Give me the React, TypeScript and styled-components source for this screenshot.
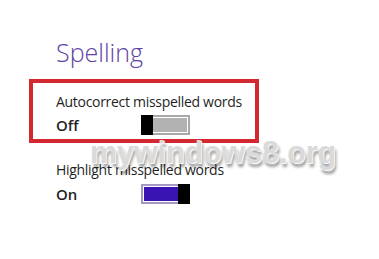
import React from "react";
import styled, { createGlobalStyle } from "styled-components";

const Global = createGlobalStyle`
  html, body { margin: 0; padding: 0; background: #ffffff; }
  body { width: 379px; height: 259px; overflow: hidden; }
`;

const Page = styled.div`
  position: relative;
  width: 379px;
  height: 259px;
  box-sizing: border-box;
  padding: 37px 0 0 29px;
  font-family: "Open Sans", "Noto Sans", sans-serif;
  color: #1f1f1f;
`;

const Title = styled.h1`
  margin: 0 0 12px 27px;
  font-size: 25px;
  line-height: 30px;
  font-weight: 300;
  color: #5e42a6;
`;

const Highlight = styled.section`
  width: 230px;
  box-sizing: border-box;
  border: 4px solid #d3282f;
  padding: 9px 0 4px 23px;
`;

const Plain = styled.section`
  margin-top: 17px;
  padding-left: 27px;
`;

const Label = styled.div<{ $gap: number }>`
  font-size: 14px;
  line-height: 20px;
  letter-spacing: -0.3px;
  white-space: nowrap;
  margin-bottom: ${(p) => p.$gap}px;
`;

const Row = styled.div`
  display: grid;
  grid-template-columns: 85px auto;
  align-items: start;
  height: 20px;
`;

const State = styled.span`
  font-size: 15px;
  line-height: 20px;
  font-weight: 600;
`;

const Track = styled.div<{ $on: boolean }>`
  position: relative;
  width: 49px;
  height: 20px;
  box-sizing: border-box;
  border: 2px solid ${(p) => (p.$on ? "#a497c4" : "#a9a9a9")};
  padding: 1px;
  background: #ffffff;
`;

const Fill = styled.div<{ $on: boolean }>`
  width: 100%;
  height: 100%;
  background: ${(p) => (p.$on ? "#3a14b2" : "#b2b2b2")};
`;

const Thumb = styled.div<{ $on: boolean }>`
  position: absolute;
  top: -2px;
  bottom: -2px;
  width: 12px;
  background: #000000;
  ${(p) => (p.$on ? "right: -2px;" : "left: -2px;")}
`;

const Watermark = styled.div`
  position: absolute;
  left: 90px;
  top: 137px;
  font-family: "Liberation Sans", Arial, sans-serif;
  font-weight: 700;
  font-size: 30.5px;
  line-height: 30px;
  color: #dadada;
  letter-spacing: -0.1px;
  text-shadow: 1px 1px 0 #f6f6f6, 2px 4px 3px rgba(0, 0, 0, 0.4);
  pointer-events: none;
`;

function Toggle({ on }: { on: boolean }) {
  return (
    <Track $on={on}>
      <Fill $on={on} />
      <Thumb $on={on} />
    </Track>
  );
}

export default function App() {
  return (
    <>
      <Global />
      <Page>
        <Title>Spelling</Title>
        <Highlight>
          <Label $gap={3}>Autocorrect misspelled words</Label>
          <Row>
            <State>Off</State>
            <Toggle on={false} />
          </Row>
        </Highlight>
        <Plain>
          <Label $gap={4}>Highlight misspelled words</Label>
          <Row>
            <State>On</State>
            <Toggle on={true} />
          </Row>
        </Plain>
        <Watermark>mywindows8.org</Watermark>
      </Page>
    </>
  );
}
